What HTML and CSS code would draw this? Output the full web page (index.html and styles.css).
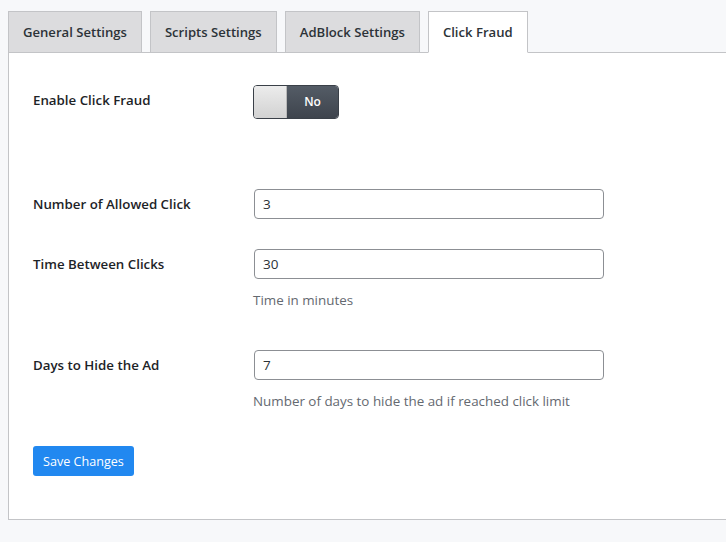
FILE: index.html
```html
<!DOCTYPE html>
<html lang="en">

<head>
    <meta charset="UTF-8">
    <meta name="viewport" content="width=device-width, initial-scale=1.0">
    <title>Click Fraud Settings</title>
    <link rel="stylesheet" href="styles.css">
</head>

<body>
    <div class="wrap">
        <div class="tabs">
            <a class="tab" href="#">General Settings</a>
            <a class="tab" href="#">Scripts Settings</a>
            <a class="tab" href="#">AdBlock Settings</a>
            <a class="tab active" href="#">Click Fraud</a>
        </div>
        <div class="panel">
            <div class="row row-toggle">
                <label class="label">Enable Click Fraud</label>
                <div class="toggle">
                    <span class="knob"></span>
                    <span class="state">No</span>
                </div>
            </div>
            <div class="row">
                <label class="label" for="clicks">Number of Allowed Click</label>
                <div class="field">
                    <input type="text" id="clicks" value="3">
                </div>
            </div>
            <div class="row">
                <label class="label" for="between">Time Between Clicks</label>
                <div class="field">
                    <input type="text" id="between" value="30">
                    <p class="desc">Time in minutes</p>
                </div>
            </div>
            <div class="row">
                <label class="label" for="days">Days to Hide the Ad</label>
                <div class="field">
                    <input type="text" id="days" value="7">
                    <p class="desc">Number of days to hide the ad if reached click limit</p>
                </div>
            </div>
            <button class="save">Save Changes</button>
        </div>
    </div>
</body>

</html>
```

FILE: styles.css
```css
* {
    font-family: "Open Sans", "Noto Sans", sans-serif;
    box-sizing: border-box;
}

body {
    margin: 0;
    background-color: #f7f8fa;
    color: #1d2327;
}

.wrap {
    padding: 11px 0 0 8px;
}

.tabs {
    display: flex;
    gap: 8px;
    margin-bottom: -1px;
}

.tab {
    display: block;
    height: 42px;
    line-height: 40px;
    padding: 0 14px;
    background-color: #dcdcde;
    border: 1px solid #c3c4c7;
    color: #2c3338;
    font-size: 13.1px;
    font-weight: 600;
    text-decoration: none;
}

.tab.active {
    background-color: #fff;
    border-bottom-color: #fff;
}

.panel {
    background-color: #fff;
    border: 1px solid #c3c4c7;
    border-right: none;
    height: 468px;
    padding: 32px 0 0 24px;
}

.row {
    display: grid;
    grid-template-columns: 221px 350px;
    align-items: start;
    margin-bottom: 30px;
}

.row-toggle {
    margin-bottom: 70px;
}

.label {
    font-size: 13.3px;
    font-weight: 600;
    line-height: 30px;
}

.row-toggle .label {
    line-height: 31px;
}

.toggle {
    display: flex;
    width: 86px;
    height: 34px;
    border-radius: 4px;
    overflow: hidden;
    border: 1px solid #3a4048;
    margin-left: -1px;
}

.knob {
    width: 33px;
    background: linear-gradient(#ececec, #d2d2d2);
    border-right: 1px solid #b9b9b9;
}

.state {
    flex: 1;
    background: linear-gradient(#545c66, #3e444d);
    color: #fff;
    font-size: 12px;
    font-weight: 600;
    line-height: 32px;
    text-align: center;
}

input[type="text"] {
    display: block;
    width: 350px;
    height: 30px;
    padding: 0 8px;
    border: 1px solid #8c8f94;
    border-radius: 4px;
    font-size: 13.5px;
    color: #2c3338;
}

.desc {
    margin: 11px 0 0 -1px;
    font-size: 13.4px;
    line-height: 20px;
    color: #646970;
}

.row:nth-child(4) {
    margin-bottom: 35px;
}

.row:nth-child(3) {
    margin-bottom: 40px;
}

.save {
    display: block;
    height: 30px;
    padding: 0 10px;
    background-color: #2188f0;
    border: none;
    border-radius: 3px;
    color: #fff;
    font-size: 12.6px;
}
```
